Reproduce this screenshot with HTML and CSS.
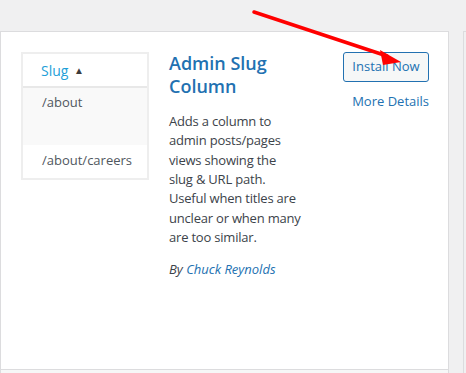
FILE: index.html
```html
<!DOCTYPE html>
<html lang="en">
<head>
    <meta charset="UTF-8">
    <title>Add Plugins</title>
    <link rel="stylesheet" href="styles.css">
</head>
<body>
    <!-- Plugin cards row -->
    <div class="cards">
        <div class="plugin-card">
            <div class="card-top">
                <!-- Plugin icon: a small slug table -->
                <div class="plugin-icon">
                    <div class="icon-head">Slug <span class="sort">&#9650;</span></div>
                    <div class="icon-row alt">/about</div>
                    <div class="icon-row">/about/careers</div>
                </div>

                <div class="plugin-info">
                    <h3 class="plugin-name">Admin Slug Column</h3>
                    <p class="plugin-desc">Adds a column to admin posts/pages views showing the slug &amp; URL path. Useful when titles are unclear or when many are too similar.</p>
                    <p class="plugin-author">By <a href="#">Chuck Reynolds</a></p>
                </div>

                <div class="action-links">
                    <a class="install-button" href="#">Install Now</a>
                    <a class="more-details" href="#">More Details</a>
                </div>
            </div>
            <div class="card-bottom"></div>
        </div>
        <div class="plugin-card next"></div>
    </div>

    <!-- Red annotation arrow -->
    <svg class="arrow" width="466" height="373" viewBox="0 0 466 373">
        <line x1="254" y1="12" x2="387" y2="56" stroke="#f00" stroke-width="3.5" stroke-linecap="round"/>
        <polygon points="401,62 380,50 383,65" fill="#f00"/>
    </svg>
</body>
</html>
```

FILE: styles.css
```css
body {
    margin: 0;
    background-color: #f0f0f1;
    font-family: "Open Sans", "Noto Sans", sans-serif;
    font-size: 13px;
    color: #3c434a;
    overflow: hidden;
}

.cards {
    display: flex;
    gap: 14px;
    padding-top: 31px;
}

.plugin-card {
    flex: 0 0 449px;
    box-sizing: border-box;
    border: 1px solid #dcdcde;
    border-bottom: none;
    background-color: #fff;
}

.plugin-card.next {
    flex: 0 0 3px;
    border-right: none;
    background-color: #f0f0f1;
}

.card-top {
    display: flex;
    height: 337px;
    box-sizing: border-box;
    padding: 20px 19px 0 20px;
}

.card-bottom {
    height: 10px;
    border-top: 1px solid #dcdcde;
    background-color: #f6f7f7;
}

/* icon */
.plugin-icon {
    flex: 0 0 128px;
    height: 128px;
    box-sizing: border-box;
    border: 2px solid #eeeeee;
    display: flex;
    flex-direction: column;
    color: #50575e;
}

.icon-head {
    height: 34px;
    box-sizing: border-box;
    padding: 7px 0 0 18px;
    font-size: 14px;
    color: #1e9fd8;
    border-bottom: 2px solid #e8e8e8;
}

.sort {
    font-size: 10px;
    color: #3c3c3c;
    vertical-align: 2px;
    margin-left: 2px;
}

.icon-row {
    padding: 5px 0 0 19px;
    height: 57px;
    box-sizing: border-box;
}

.icon-row.alt {
    background-color: #f9f9f9;
}

.icon-row + .icon-row {
    height: auto;
    flex: 1;
    padding-top: 6px;
}

/* info */
.plugin-info {
    flex: 0 0 133px;
    margin-left: 20px;
}

.plugin-name {
    margin: 0;
    font-size: 18px;
    font-weight: 600;
    line-height: 1.3;
    color: #2271b1;
}

.plugin-desc {
    margin: 13px 0 0;
    line-height: 19.4px;
    letter-spacing: -0.2px;
}

.plugin-author {
    margin: 12px 0 0;
    font-style: italic;
    line-height: 19.5px;
}

.plugin-author a {
    color: #2271b1;
    text-decoration: none;
}

/* actions */
.action-links {
    flex: 1;
    display: flex;
    flex-direction: column;
    align-items: flex-end;
}

.install-button {
    display: block;
    box-sizing: border-box;
    width: 86px;
    height: 30px;
    line-height: 27px;
    text-align: center;
    border: 1px solid #2271b1;
    border-radius: 3px;
    background-color: #f6f7f7;
    color: #2271b1;
    text-decoration: none;
}

.more-details {
    margin-top: 10px;
    color: #2271b1;
    text-decoration: none;
}

.arrow {
    position: absolute;
    top: 0;
    left: 0;
    pointer-events: none;
}
```
